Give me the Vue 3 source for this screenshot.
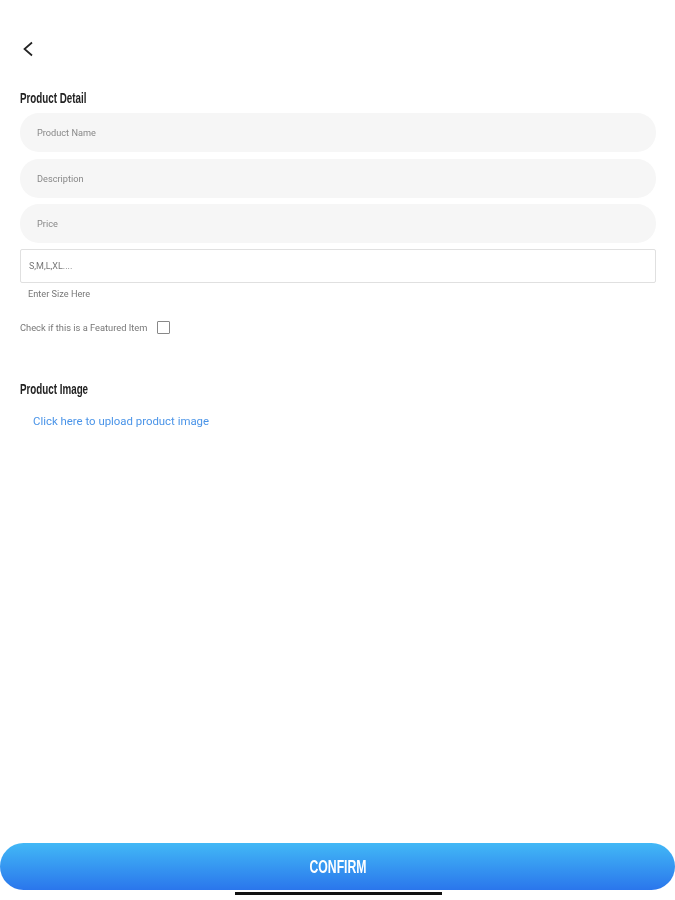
<script setup>
import { ref } from "vue"

const fields = [
	{ key: "name", placeholder: "Product Name" },
	{ key: "description", placeholder: "Description" },
	{ key: "price", placeholder: "Price" }
]

const featured = ref(false)
</script>

<template>
	<div class="page">
		<button class="back" aria-label="Back">
			<svg viewBox="0 0 12 16" width="12" height="16" fill="none" stroke="#222" stroke-width="1.7">
				<path d="M10 1.5 L2.5 8 L10 14.5" />
			</svg>
		</button>

		<h2 class="heading"><span>Product Detail</span></h2>
		<div class="fields">
			<input
				v-for="field in fields"
				:key="field.key"
				class="pill"
				:placeholder="field.placeholder"
			/>
		</div>
		<input class="size-input" placeholder="S,M,L,XL...." />
		<p class="hint">Enter Size Here</p>

		<label class="featured">
			<span>Check if this is a Featured Item</span>
			<input v-model="featured" type="checkbox" />
		</label>

		<h2 class="heading image-heading"><span>Product Image</span></h2>
		<a class="upload">Click here to upload product image</a>

		<button class="confirm"><span>CONFIRM</span></button>
		<div class="home-bar"></div>
	</div>
</template>

<style scoped>
.page {
	position: relative;
	box-sizing: border-box;
	width: 675px;
	height: 900px;
	padding: 41px 19px 10px 20px;
	display: flex;
	flex-direction: column;
	background: #fff;
	font-family: Roboto, "Liberation Sans", sans-serif;
	overflow: hidden;
	filter: blur(0.4px);
}

.back {
	width: 16px;
	height: 16px;
	padding: 0;
	border: none;
	background: none;
	align-self: flex-start;
}

.heading {
	margin: 34px 0 0;
	font-family: "Liberation Sans", sans-serif;
	font-size: 14px;
	line-height: 14px;
	font-weight: 700;
	color: #222;
}

/* no condensed face installed, so squeeze the regular one */
.heading span {
	display: inline-block;
	transform: scaleX(0.7);
	transform-origin: left center;
}

.fields {
	margin-top: 8px;
	display: flex;
	flex-direction: column;
	gap: 6.5px;
}

.pill {
	box-sizing: border-box;
	height: 39px;
	padding: 0 17px;
	border: none;
	border-radius: 19px;
	background: #f6f6f6;
	font: 9.2px Roboto, sans-serif;
	outline: none;
}

.pill::placeholder {
	color: #888;
}

.size-input {
	box-sizing: border-box;
	height: 34px;
	margin-top: 6px;
	padding: 0 8px;
	border: 1.5px solid #e0e0e0;
	border-radius: 2px;
	font: 9px Roboto, sans-serif;
	outline: none;
}

.size-input::placeholder {
	color: #777;
}

.hint {
	margin: 5px 0 0 8px;
	font-size: 9.2px;
	line-height: 11px;
	color: #777;
}

.featured {
	margin-top: 22px;
	display: flex;
	align-items: center;
	gap: 10px;
	font-size: 9.3px;
	color: #777;
}

.featured input {
	appearance: none;
	width: 13px;
	height: 13px;
	margin: 0;
	border: 1.5px solid #888;
	border-radius: 1px;
	background: #fff;
}

.image-heading {
	margin-top: 48px;
}

.upload {
	margin: 18px 0 0 13px;
	font-size: 11.4px;
	line-height: 14px;
	color: #4a94e8;
	cursor: pointer;
}

.confirm {
	margin: auto -19px 0 -20px;
	height: 47px;
	padding-top: 2px;
	border: none;
	border-radius: 24px;
	background: linear-gradient(to bottom, #42b8f6, #2a76ec);
	color: #fff;
	font-family: "Liberation Sans", sans-serif;
	font-size: 18px;
	font-weight: 700;
}

.confirm span {
	display: inline-block;
	transform: scaleX(0.68);
}

.home-bar {
	position: absolute;
	left: 235px;
	bottom: 5px;
	width: 207px;
	height: 3px;
	background: #111;
}
</style>

<style>
body {
	margin: 0;
}
</style>
